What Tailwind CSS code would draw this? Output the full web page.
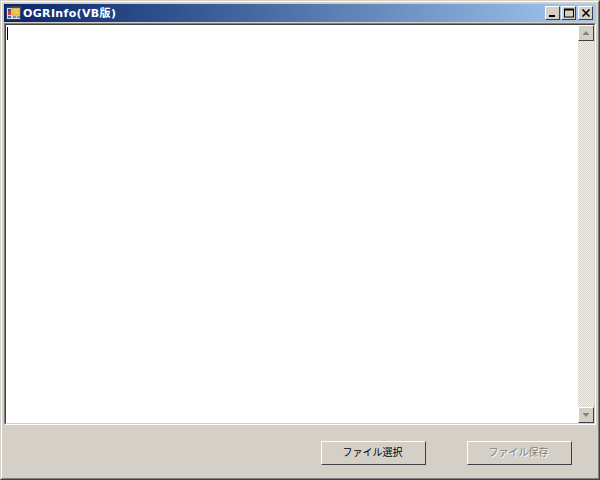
<!DOCTYPE html>
<html lang="ja">
<head>
    <meta charset="UTF-8">
    <title>OGRInfo(VB版)</title>
    <script src="https://cdn.jsdelivr.net/npm/@tailwindcss/browser@4"></script>
</head>
<body class="w-[600px] h-[480px] overflow-hidden bg-[#d4d0c8] font-['Liberation_Sans','Noto_Sans_CJK_JP',sans-serif]">

    <!-- window frame -->
    <div class="w-[600px] h-[480px] border border-[#d4d0c8] border-r-[#404040] border-b-[#404040]">
        <div class="h-full border border-white border-r-[#808080] border-b-[#808080] p-0.5 flex flex-col">

            <!-- title bar -->
            <div class="h-[18px] flex items-center pl-0.5 pr-[3px] bg-gradient-to-r from-[#0a246a] to-[#a6caf0]">
                <svg class="w-4 h-4 shrink-0" viewBox="0 0 16 16">
                    <rect x="0.5" y="1.5" width="14" height="13" fill="#d8d8e0" stroke="#303a70"/>
                    <rect x="1" y="2" width="13" height="1" fill="#303a70"/>
                    <rect x="2" y="4" width="3" height="2" fill="#3050a0"/>
                    <rect x="2" y="6" width="3" height="4" fill="#d04030"/>
                    <rect x="2" y="11" width="3" height="2" fill="#506090"/>
                    <rect x="6" y="3" width="8" height="7" fill="#f0c850" stroke="#a08840" stroke-width="0.5"/>
                    <rect x="7" y="11" width="3" height="2" fill="#8090a0"/>
                    <rect x="11" y="11" width="3" height="2" fill="#8090a0"/>
                </svg>
                <span class="ml-px font-['DejaVu_Sans','Noto_Sans_CJK_JP',sans-serif] text-[11px] tracking-[0.35px] leading-none font-bold text-white whitespace-nowrap">OGRInfo(VB版)</span>
                <div class="ml-auto flex items-center">
                    <button class="w-[15px] h-3.5 bg-[#d4d0c8] border border-white border-r-[#404040] border-b-[#404040] flex items-center justify-center">
                        <svg class="w-2.5 h-2.5" viewBox="0 0 10 10"><rect x="1" y="7" width="6" height="2" fill="#000"/></svg>
                    </button>
                    <button class="ml-px w-[15px] h-3.5 bg-[#d4d0c8] border border-white border-r-[#404040] border-b-[#404040] flex items-center justify-center">
                        <svg class="w-2.5 h-2.5" viewBox="0 0 10 10"><rect x="0.5" y="1.5" width="9" height="7.5" fill="none" stroke="#000"/><rect x="0" y="0.5" width="10" height="2" fill="#000"/></svg>
                    </button>
                    <button class="ml-0.5 w-[15px] h-3.5 bg-[#d4d0c8] border border-white border-r-[#404040] border-b-[#404040] flex items-center justify-center">
                        <svg class="w-2.5 h-2.5" viewBox="0 0 10 10"><path d="M1.5 1.5l7 7M8.5 1.5l-7 7" stroke="#000" stroke-width="1.6"/></svg>
                    </button>
                </div>
            </div>

            <!-- text box -->
            <div class="mt-px h-[402px] border border-[#808080] border-r-white border-b-white">
                <div class="h-full border border-[#404040] border-r-[#d4d0c8] border-b-[#d4d0c8] bg-white flex">
                    <div class="flex-1 pl-px pt-0.5">
                        <div class="w-px h-[13px] bg-black"></div>
                    </div>
                    <!-- scrollbar -->
                    <div class="w-4 flex flex-col bg-[repeating-conic-gradient(#d4d0c8_0_25%,#f4f3f0_0_50%)] bg-[length:2px_2px]">
                        <div class="h-4 bg-[#d4d0c8] border border-white border-r-[#404040] border-b-[#404040] flex items-center justify-center">
                            <svg class="w-2 h-2" viewBox="0 0 8 8"><path d="M4 2L7.5 6H0.5z" fill="#808080"/></svg>
                        </div>
                        <div class="flex-1"></div>
                        <div class="h-4 bg-[#d4d0c8] border border-white border-r-[#404040] border-b-[#404040] flex items-center justify-center">
                            <svg class="w-2 h-2" viewBox="0 0 8 8"><path d="M4 6L7.5 2H0.5z" fill="#808080"/></svg>
                        </div>
                    </div>
                </div>
            </div>

            <!-- buttons -->
            <div class="flex justify-end gap-[41px] pt-4 pr-6">
                <button class="w-[105px] h-6 pb-px pr-0.5 bg-[#d4d0c8] border border-white border-r-[#404040] border-b-[#404040] text-[10px] text-black">ファイル選択</button>
                <button disabled class="w-[105px] h-6 pb-px pr-0.5 bg-[#d4d0c8] border border-white border-r-[#404040] border-b-[#404040] text-[10px] text-[#808080] [text-shadow:1px_1px_0_#fff]">ファイル保存</button>
            </div>
        </div>
    </div>

</body>
</html>
